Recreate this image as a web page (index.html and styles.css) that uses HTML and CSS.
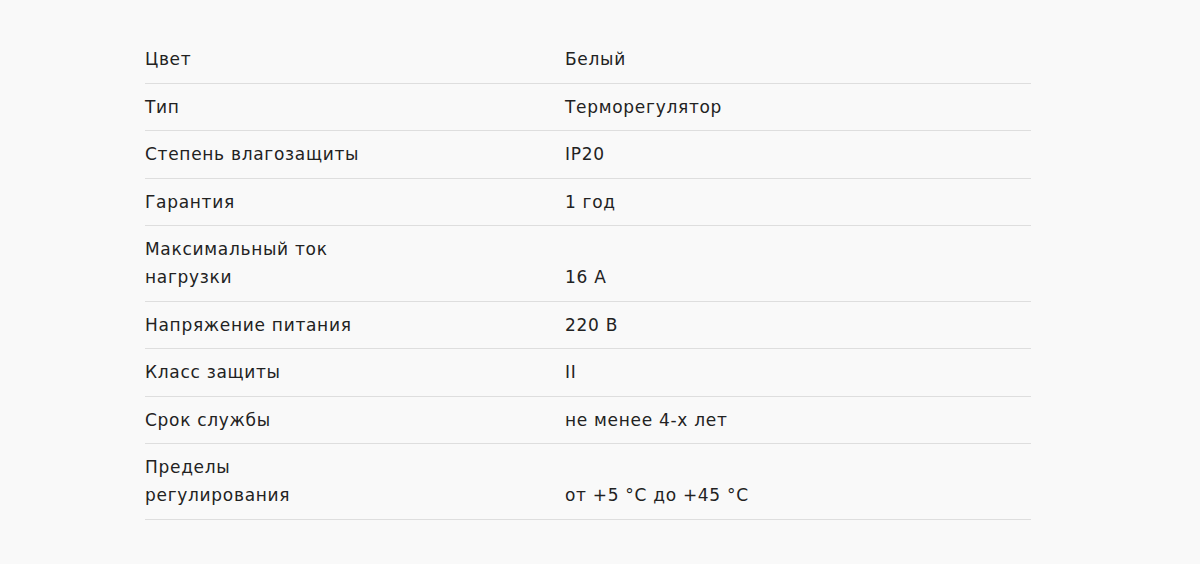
FILE: index.html
```html
<!DOCTYPE html>
<html lang="ru">
<head>
<meta charset="utf-8">
<title>Характеристики</title>
<link rel="stylesheet" href="styles.css">
</head>
<body>
<div class="specs">
  <table class="specs-table">
    <tbody>
      <tr><td class="label"><span class="label-text">Цвет</span></td><td class="value">Белый</td></tr>
      <tr><td class="label"><span class="label-text">Тип</span></td><td class="value">Терморегулятор</td></tr>
      <tr><td class="label"><span class="label-text">Степень влагозащиты</span></td><td class="value">IP20</td></tr>
      <tr><td class="label"><span class="label-text">Гарантия</span></td><td class="value">1 год</td></tr>
      <tr><td class="label"><span class="label-text">Максимальный ток нагрузки</span></td><td class="value">16 А</td></tr>
      <tr><td class="label"><span class="label-text">Напряжение питания</span></td><td class="value">220 В</td></tr>
      <tr><td class="label"><span class="label-text">Класс защиты</span></td><td class="value">II</td></tr>
      <tr><td class="label"><span class="label-text">Срок службы</span></td><td class="value">не менее 4-х лет</td></tr>
      <tr><td class="label"><span class="label-text">Пределы регулирования</span></td><td class="value">от +5 °C до +45 °C</td></tr>
    </tbody>
  </table>
</div>
</body>
</html>
```
FILE: styles.css
```css
html, body {
  margin: 0;
  padding: 0;
  background: #f9f9f9;
}
body {
  font-family: "DejaVu Sans", "Open Sans", "Liberation Sans", sans-serif;
  font-size: 17px;
  letter-spacing: 0.7px;
  color: #222222;
}
.specs {
  padding: 36px 0 0 145px;
}
.specs-table {
  width: 886px;
  border-collapse: collapse;
}
.specs-table td {
  padding: 9.25px 0;
  line-height: 28px;
  border-bottom: 1px solid #dedede;
  vertical-align: bottom;
  text-align: left;
}
.label {
  width: 420px;
}
.label-text {
  display: block;
  max-width: 232px;
}
```
